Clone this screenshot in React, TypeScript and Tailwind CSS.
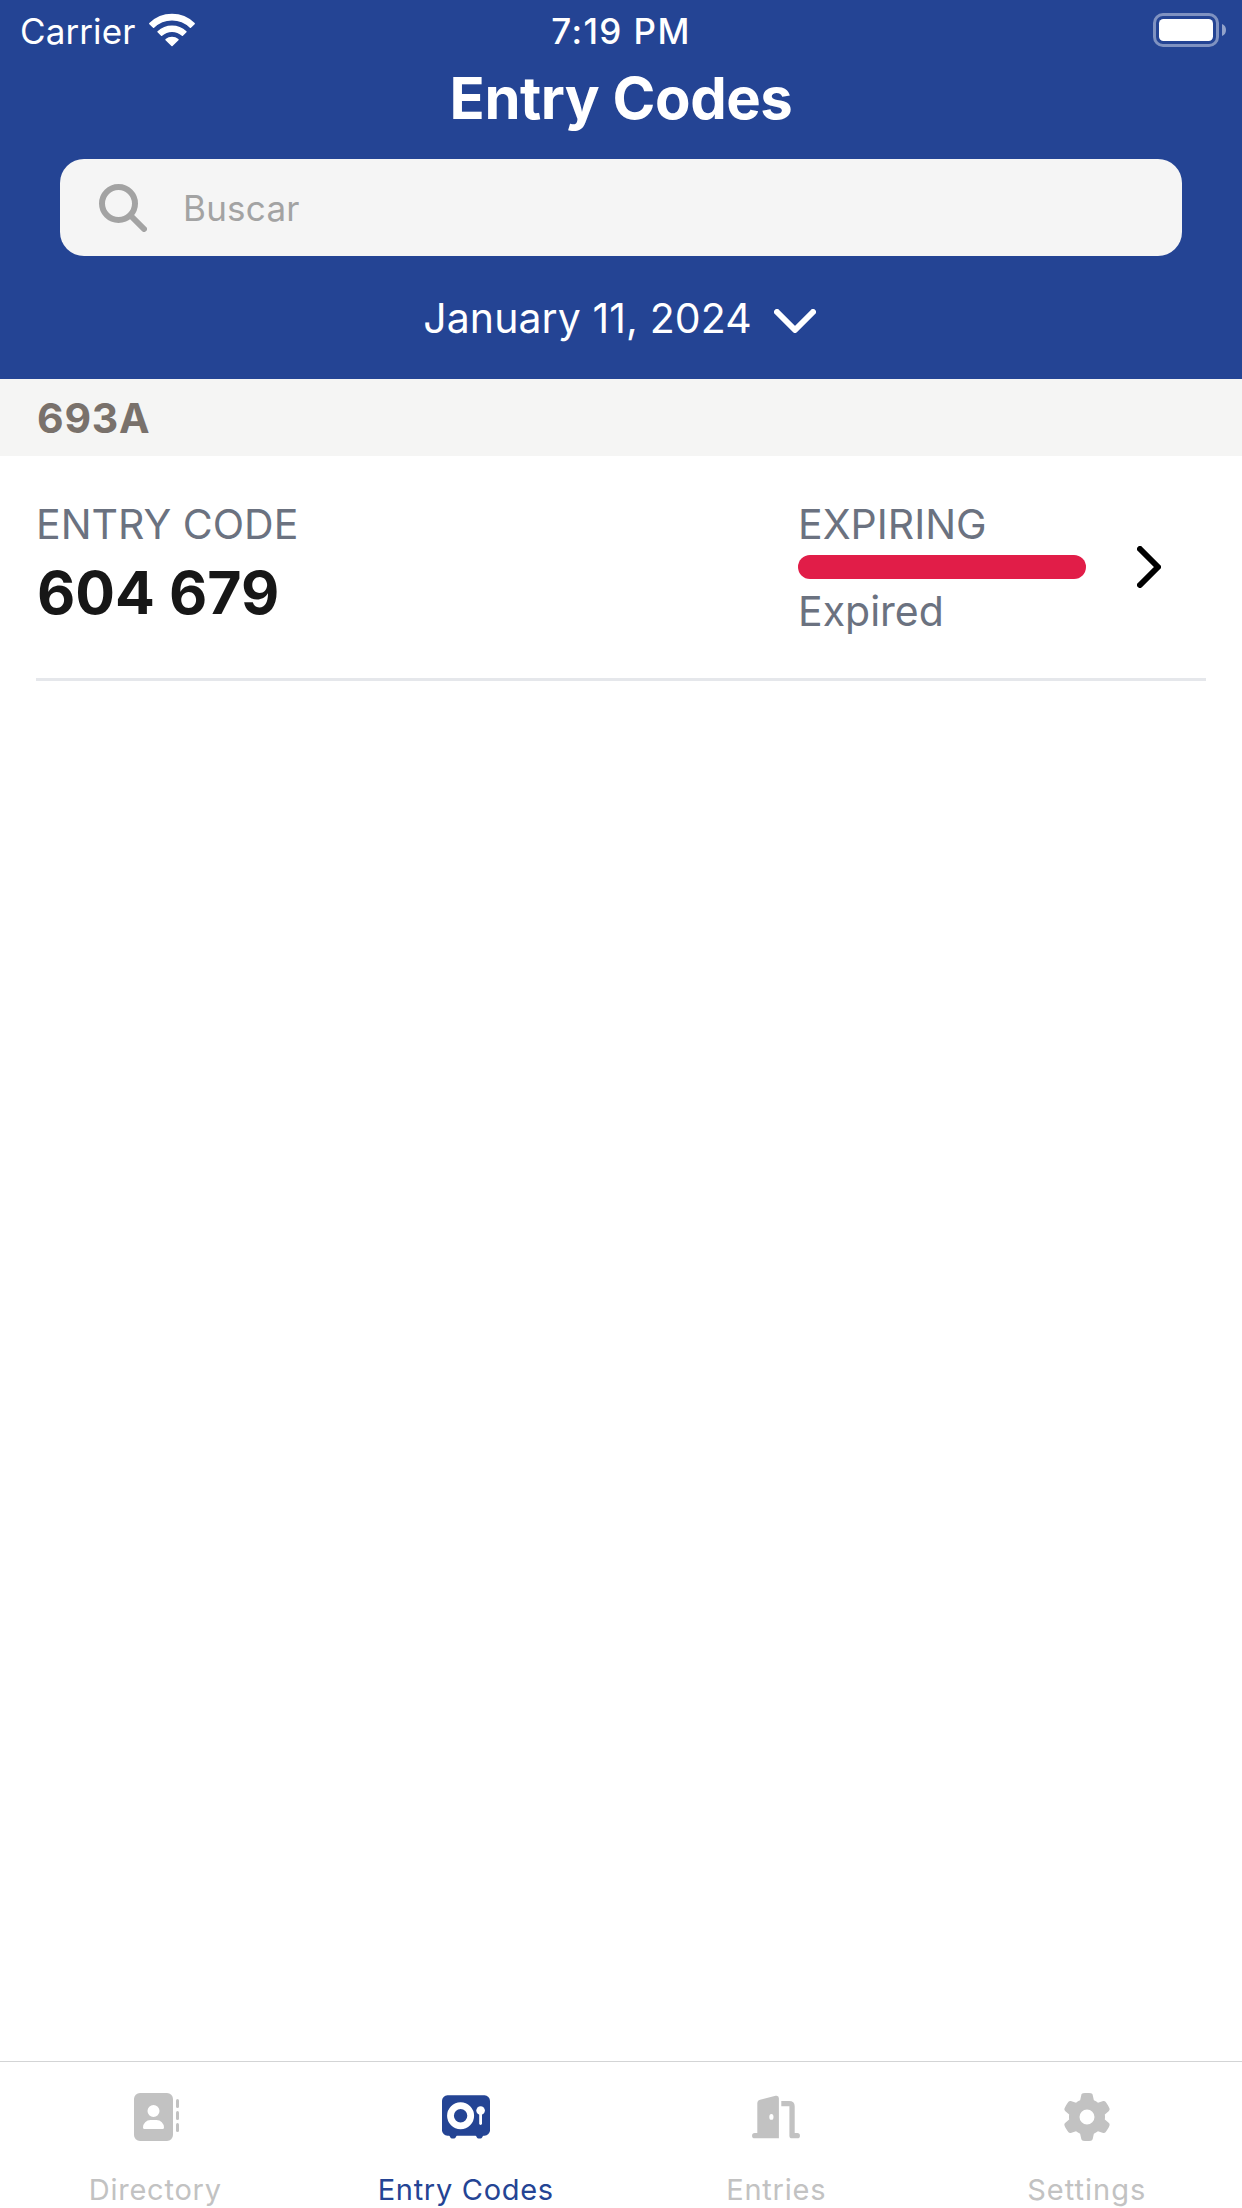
import type { ReactNode } from 'react';
import { FaGear } from 'react-icons/fa6';

interface Tab {
  label: string;
  icon: ReactNode;
  active?: boolean;
  tracking: string;
}

function WifiIcon() {
  return (
    <svg className="w-[46px] h-[34px]" viewBox="0 0 46 34" fill="currentColor" stroke="currentColor" strokeWidth={1.6} strokeLinejoin="round">
      <path d="M0.9 10.6 A31.7 31.7 0 0 1 45.1 10.6 L41.4 14.2 A26.4 26.4 0 0 0 4.6 14.2 Z" />
      <path d="M9.1 18.8 A20.3 20.3 0 0 1 36.9 18.8 L33.4 22.2 A15.2 15.2 0 0 0 12.6 22.2 Z" />
      <path d="M17.1 26.7 A9.2 9.2 0 0 1 28.9 26.7 L23 32.3 Z" />
    </svg>
  );
}

function BatteryIcon() {
  return (
    <svg className="w-[74px] h-[34px]" viewBox="0 0 74 34" fill="none">
      <rect x="1.5" y="1.5" width="63" height="31" rx="8.5" stroke="white" strokeOpacity="0.42" strokeWidth={3} />
      <rect x="6" y="6" width="54" height="22" rx="4.5" fill="white" />
      <path d="M69 11 A6.5 6.5 0 0 1 69 23 Z" fill="white" fillOpacity="0.5" />
    </svg>
  );
}

function SearchIcon() {
  return (
    <svg className="w-12 h-12" viewBox="0 0 48 48" fill="none" stroke="currentColor" strokeWidth={6} strokeLinecap="round">
      <circle cx="19.5" cy="19.5" r="16.5" />
      <path d="M32 32 L45 45" />
    </svg>
  );
}

function DirectoryIcon() {
  return (
    <svg className="w-12 h-12" viewBox="0 0 48 48" fill="currentColor">
      <path
        fillRule="evenodd"
        d="M9 0 H36 A6 6 0 0 1 42 6 V42 A6 6 0 0 1 36 48 H9 A6 6 0 0 1 3 42 V6 A6 6 0 0 1 9 0 Z M22.5 12 A6 6 0 1 0 22.5 24 A6 6 0 1 0 22.5 12 Z M19.5 27 A7.5 7.5 0 0 0 12 34.5 A1.5 1.5 0 0 0 13.5 36 H31.5 A1.5 1.5 0 0 0 33 34.5 A7.5 7.5 0 0 0 25.5 27 Z"
      />
      <rect x="45" y="6" width="3" height="9" rx="1.5" />
      <rect x="45" y="18" width="3" height="9" rx="1.5" />
      <rect x="45" y="30" width="3" height="9" rx="1.5" />
    </svg>
  );
}

function SafeIcon() {
  return (
    <svg className="w-12 h-12" viewBox="0 0 48 48" fill="currentColor">
      <rect x="0" y="2.3" width="48" height="40.4" rx="5.5" />
      <path d="M7 42 H15 L13.6 44.6 Q13.1 45.6 12 45.6 H10 Q8.9 45.6 8.4 44.6 Z" />
      <path d="M33.5 42 H41.5 L40.1 44.6 Q39.6 45.6 38.5 45.6 H36.5 Q35.4 45.6 34.9 44.6 Z" />
      <circle cx="18.6" cy="22.7" r="10.1" fill="none" stroke="white" strokeWidth={6.8} />
      <circle cx="38.6" cy="17.5" r="4.3" fill="white" />
      <path d="M38.6 18 V30.5" stroke="white" strokeWidth={2.8} strokeLinecap="round" />
    </svg>
  );
}

function DoorIcon() {
  return (
    <svg className="w-12 h-12" viewBox="0 0 48 48" fill="currentColor">
      <path
        fillRule="evenodd"
        d="M5.3 40 V10.4 Q5.3 7.5 8.1 6.7 L23.6 2.8 Q26.9 2.1 26.9 5.3 V45.3 H2.7 A2.65 2.65 0 0 1 2.7 40 Z M19.4 21 A2.1 2.9 0 1 0 19.4 26.8 A2.1 2.9 0 1 0 19.4 21 Z"
      />
      <path d="M29.3 8 H37 Q42.7 8 42.7 13.3 V40 H45.3 A2.65 2.65 0 0 1 45.3 45.3 H40 Q37.4 45.3 37.4 42.7 V13.3 H29.3 Z" />
    </svg>
  );
}

const tabs: Tab[] = [
  { label: 'Directory', icon: <DirectoryIcon />, tracking: 'tracking-[0.77px]' },
  { label: 'Entry Codes', icon: <SafeIcon />, active: true, tracking: 'tracking-[0.69px]' },
  { label: 'Entries', icon: <DoorIcon />, tracking: 'tracking-[0.77px]' },
  { label: 'Settings', icon: <FaGear className="w-12 h-12" />, tracking: 'tracking-[1px]' },
];

function StatusBar() {
  return (
    <div className="grid grid-cols-3 items-center h-[62px] px-5 text-[35px] leading-[62px]">
      <div className="flex items-center">
        <span className="tracking-[0.1px]">Carrier</span>
        <span className="ml-[14px] -mt-[2px]">
          <WifiIcon />
        </span>
      </div>
      <span className="text-center font-medium tracking-[1.4px]">7:19 PM</span>
      <div className="flex justify-end -mt-[2px] -mr-[5px]">
        <BatteryIcon />
      </div>
    </div>
  );
}

function Header() {
  return (
    <header className="h-[379px] bg-[#244494] text-white">
      <StatusBar />
      <h1 className="h-[72px] text-center text-[58px] leading-[72px] font-bold tracking-[-0.46px]">Entry Codes</h1>
      <div className="flex items-center h-[97px] mt-[25px] mx-[60px] pl-[39px] rounded-3xl bg-neutral-100 text-[#a3a3a3]">
        <SearchIcon />
        <span className="ml-[36px] mt-px text-[35px] leading-[60px] tracking-[0.25px]">Buscar</span>
      </div>
      <div className="flex items-center justify-center h-[123px] pr-[3px] text-[41px] leading-[60px]">
        <span className="tracking-[0.1px]">January 11, 2024</span>
        <svg className="w-[42px] h-6 ml-[22px] mt-[7px]" viewBox="0 0 42 24" fill="none" stroke="currentColor" strokeWidth={6} strokeLinecap="round" strokeLinejoin="round">
          <path d="M3 3 L21 21 L39 3" />
        </svg>
      </div>
    </header>
  );
}

function EntryRow() {
  return (
    <div className="flex mx-9 h-[225px] pt-[38px] border-b-3 border-gray-200 text-[41px] text-[#6b7280]">
      <div className="w-[762px]">
        <div className="leading-[60px]">ENTRY CODE</div>
        <div className="pl-px text-[59px] leading-[78px] font-bold text-neutral-900">604 679</div>
      </div>
      <div className="w-[288px]">
        <div className="leading-[60px]">EXPIRING</div>
        <div className="h-6 mt-px rounded-full bg-[#e11d48]" />
        <div className="leading-[64px]">Expired</div>
      </div>
      <svg className="w-6 h-[42px] ml-[51px] mt-[52px] text-black" viewBox="0 0 24 42" fill="none" stroke="currentColor" strokeWidth={6} strokeLinecap="round" strokeLinejoin="round">
        <path d="M3 3 L21 21 L3 39" />
      </svg>
    </div>
  );
}

function TabBar() {
  return (
    <nav className="grid grid-cols-4 h-[147px] border-t border-[#d3d4d5]">
      {tabs.map((tab) => (
        <div
          key={tab.label}
          className={`flex flex-col items-center pt-[31px] ${tab.active ? 'text-[#244494]' : 'text-[#c2c2c2]'}`}
        >
          {tab.icon}
          <span className={`mt-[30px] text-[29px] leading-[37px] ${tab.tracking}`}>{tab.label}</span>
        </div>
      ))}
    </nav>
  );
}

export default function App() {
  return (
    <div className="flex flex-col h-[2208px] bg-white font-['Inter',sans-serif] overflow-hidden">
      <Header />
      <main className="grow">
        <div className="h-[77px] pl-[37px] pt-px bg-stone-100 text-stone-500 text-[41px] leading-[77px] font-bold tracking-[0.75px]">693A</div>
        <EntryRow />
      </main>
      <TabBar />
    </div>
  );
}
